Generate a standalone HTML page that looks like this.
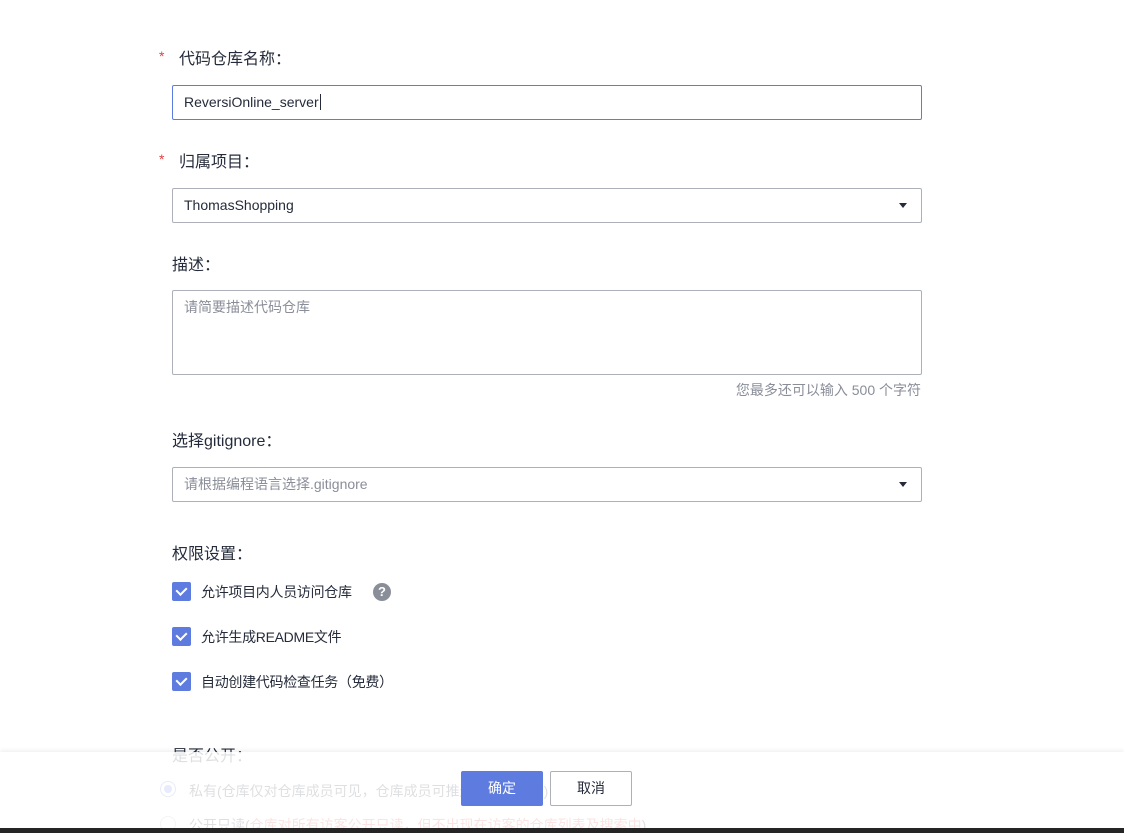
<!DOCTYPE html>
<html><head><meta charset="utf-8"><style>
body{margin:0;width:1124px;height:833px;overflow:hidden;background:#fff;font-family:"Liberation Sans","Noto Sans CJK SC",sans-serif;color:#252b3a;position:relative}
.a{position:absolute}
.lbl{font-size:16px;color:#252b3a}
.star{color:#e0423f;font-size:14px}
.inp{position:absolute;left:172px;width:750px;border:1px solid #adb0b8;border-radius:2px;box-sizing:border-box;font-size:14px;padding-left:11px}
.caret{position:absolute;right:14px;top:14px;width:0;height:0;border-left:4px solid transparent;border-right:4px solid transparent;border-top:5px solid #252b3a}
.cb{position:absolute;left:172px;width:19px;height:19px;background:#5e7ce0;border-radius:2px}
.cb:after{content:"";position:absolute;left:6px;top:3px;width:5px;height:8px;border:solid #fff;border-width:0 2px 2px 0;transform:rotate(45deg)}
.ct{position:absolute;left:201px;font-size:14px;color:#252b3a;letter-spacing:-0.3px}
</style></head><body>
<span class="a star" style="left:159px;top:48px">*</span><span class="a lbl" style="left:179px;top:45px">代码仓库名称：</span>
<div class="inp" style="top:85px;height:35px;line-height:33px;border-color:#5e7ce0">ReversiOnline_server<span style="border-left:1px solid #252b3a;margin-left:1px"></span></div>
<span class="a star" style="left:159px;top:151px">*</span><span class="a lbl" style="left:179px;top:148px">归属项目：</span>
<div class="inp" style="top:188px;height:35px;line-height:33px">ThomasShopping<div class="caret"></div></div>
<span class="a lbl" style="left:172px;top:251px">描述：</span>
<div class="inp" style="top:290px;height:85px;line-height:33px;color:#8a8e99">请简要描述代码仓库</div>
<span class="a" style="right:203px;top:380px;font-size:14px;color:#8a8e99">您最多还可以输入 500 个字符</span>
<span class="a lbl" style="left:172px;top:427px">选择gitignore：</span>
<div class="inp" style="top:467px;height:35px;line-height:33px;color:#8a8e99">请根据编程语言选择.gitignore<div class="caret"></div></div>
<span class="a lbl" style="left:172px;top:540px">权限设置：</span>
<div class="cb" style="top:582px"></div><span class="ct" style="top:582px">允许项目内人员访问仓库</span>
<div class="a" style="left:373px;top:583px;width:18px;height:18px;border-radius:50%;background:#8a8e99;color:#fff;font-size:13px;font-weight:bold;text-align:center;line-height:18px">?</div>
<div class="cb" style="top:627px"></div><span class="ct" style="top:627px">允许生成README文件</span>
<div class="cb" style="top:672px"></div><span class="ct" style="top:672px">自动创建代码检查任务（免费）</span>
<span class="a lbl" style="left:172px;top:742px">是否公开：</span>
<div class="a" style="left:160px;top:781px;width:16px;height:16px;border-radius:50%;border:1px solid #5e7ce0;box-sizing:border-box"><div style="margin:3px;width:8px;height:8px;border-radius:50%;background:#5e7ce0"></div></div>
<span class="a" style="left:189px;top:781px;font-size:14px">私有(仓库仅对仓库成员可见，仓库成员可推送代码到仓库)</span>
<div class="a" style="left:160px;top:816px;width:16px;height:16px;border-radius:50%;border:1px solid #adb0b8;box-sizing:border-box"></div>
<span class="a" style="left:189px;top:815px;font-size:14px">公开只读(<span style="color:#e0423f">仓库对所有访客公开只读，但不出现在访客的仓库列表及搜索中</span>)</span>
<div class="a" style="left:0;top:752px;width:1124px;height:76px;background:rgba(255,255,255,0.85);box-shadow:0 -2px 4px rgba(0,0,0,0.06)"></div>
<div class="a" style="left:461px;top:771px;width:82px;height:35px;background:#5e7ce0;border-radius:2px;color:#fff;font-size:14px;text-align:center;line-height:35px">确定</div>
<div class="a" style="left:550px;top:771px;width:82px;height:35px;border:1px solid #adb0b8;box-sizing:border-box;border-radius:2px;background:#fff;font-size:14px;text-align:center;line-height:33px">取消</div>
<div class="a" style="left:0;top:828px;width:1124px;height:5px;background:#252525"></div>
</body></html>
